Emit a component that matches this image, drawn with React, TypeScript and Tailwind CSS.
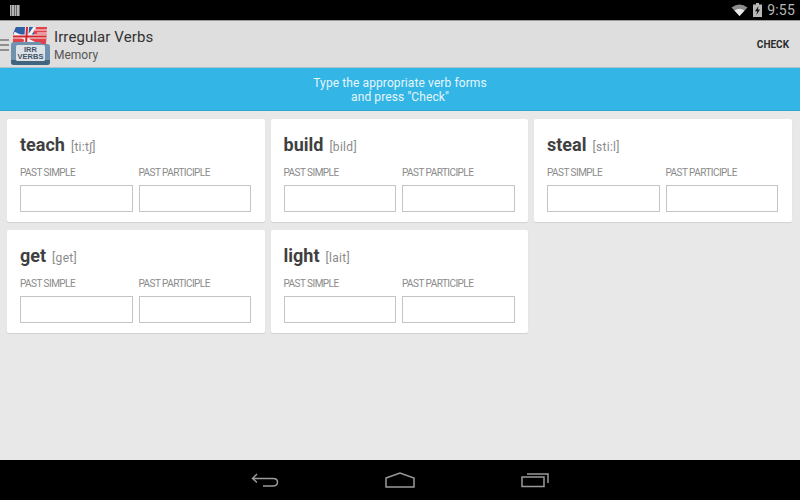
const verbs = [
  [
    { word: "teach", ipa: "[ti:tʃ]" },
    { word: "build", ipa: "[bild]" },
    { word: "steal", ipa: "[sti:l]" },
  ],
  [
    { word: "get", ipa: "[get]" },
    { word: "light", ipa: "[lait]" },
  ],
];

function Logo() {
  return (
    <div className="relative w-[39px] h-[38px] ml-[2px] mt-[4px] shrink-0">
      <svg viewBox="0 0 39 38" width="39" height="38" className="block">
        <path d="M2 7L5 0H36L35 17H2Z" fill="#e2414a" />
        <path d="M2 7L5 0H23V11H2Z" fill="#2f5fa6" />
        <path d="M3 6L27 18M24 0L12 18" stroke="#f2f2f2" strokeWidth="3" />
        <path d="M2 9.5H35M16 0L15 18" stroke="#f2f2f2" strokeWidth="4" />
        <path d="M2 9.5H35M16 0L15 18" stroke="#d4262f" strokeWidth="2" />
        <path d="M24 3H36M26 6H36" stroke="#f2f2f2" strokeWidth="1" />
        <path d="M0 18Q0 15 3 15H29L31 17H36Q39 17 39 20V35Q39 38 36 38H3Q0 38 0 35Z" fill="#6f93ae" />
        <path d="M0 33H39V35Q39 38 36 38H3Q0 38 0 35Z" fill="#41647f" />
        <rect x="5" y="18" width="29" height="16" rx="1.5" fill="#dde2e6" />
      </svg>
      <div className="absolute left-[5px] top-[18px] w-[29px] h-[16px] flex flex-col items-center justify-center text-[#3d5468] text-[7.5px] leading-[7.5px] font-bold font-['Liberation_Sans',sans-serif]">
        <span>IRR</span>
        <span>VERBS</span>
      </div>
    </div>
  );
}

function Field({ label }: { label: string }) {
  return (
    <div className="w-[112.5px]">
      <p className="text-[#8a8a8a] text-[10px] tracking-[-0.55px] leading-[14px] h-[14px] mb-[6px] pt-[1px]">{label}</p>
      <div className="h-[27px] bg-white border border-[#c4c4c4]" />
    </div>
  );
}

function VerbCard({ word, ipa }: { word: string; ipa: string }) {
  return (
    <div className="w-[257.5px] h-[103px] bg-white rounded-[2px] shadow-[0_1px_1px_#d2d2d2] px-[13px] pt-[13px]">
      <div className="flex items-baseline gap-[6px] h-[26px] mb-[7px]">
        <span className="text-[#3f3f3f] text-[18px] leading-[26px] font-bold">{word}</span>
        <span className="text-[#8a8a8a] text-[12px] tracking-[0.3px]">{ipa}</span>
      </div>
      <div className="flex gap-[6px]">
        <Field label="PAST SIMPLE" />
        <Field label="PAST PARTICIPLE" />
      </div>
    </div>
  );
}

export default function App() {
  return (
    <div className="w-[800px] h-[500px] flex flex-col overflow-hidden bg-[#e8e8e8] font-['Roboto',sans-serif]">
      {/* Status bar */}
      <div className="h-[20px] bg-black flex items-center justify-between pl-[10px] pr-[5px] shrink-0">
        <div className="w-[10px] h-[11px] bg-[repeating-linear-gradient(90deg,#b5b5b5_0px,#b5b5b5_1.5px,#666_1.5px,#666_2.5px)]" />
        <div className="flex items-center">
          <svg width="17" height="12" viewBox="0 0 17 12" className="mr-[5px]">
            <path d="M0.5 3.5Q8.5 -2.5 16.5 3.5L8.5 12Z" fill="#8c8c8c" />
            <path d="M3.5 6.6Q8.5 3 13.5 6.6L8.5 12Z" fill="#e8e8e8" />
          </svg>
          <svg width="9" height="14" viewBox="0 0 9 14" className="mr-[5px]">
            <path d="M3 0H6V1.5H9V14H0V1.5H3Z" fill="#b8b8b8" />
            <path d="M5.5 3L2 8.2H4.2L3.4 12L7 6.6H4.8Z" fill="#111" />
          </svg>
          <span className="text-[#b8b8b8] text-[14px] leading-[20px] tracking-[0.2px]">9:55</span>
        </div>
      </div>

      {/* Action bar */}
      <div className="h-[47px] bg-[#dedede] border-t border-[#9a9a9a] flex items-center shrink-0">
        <div className="w-[9px] flex flex-col gap-[3px] shrink-0 mt-[2px]">
          <div className="h-[2px] bg-[#8f8f8f]" />
          <div className="h-[2px] bg-[#8f8f8f]" />
          <div className="h-[2px] bg-[#8f8f8f]" />
        </div>
        <Logo />
        <div className="ml-[4px] flex-1 pt-[1px]">
          <p className="text-[#333] text-[15px] leading-[19px] tracking-[0.1px] mt-[1px]">Irregular Verbs</p>
          <p className="text-[#555] text-[12px] leading-[16px]">Memory</p>
        </div>
        <span className="text-[#2c2c2c] text-[10px] font-bold mr-[11px]">CHECK</span>
      </div>

      {/* Hint */}
      <div className="h-[44px] bg-[#33b5e5] border-t border-[#a9c2cc] border-b-[#2ea6d2] border-b text-[#e6f6fc] text-[12px] leading-[14px] tracking-[0.1px] flex flex-col items-center justify-center shrink-0 pt-[1px]">
        <p>Type the appropriate verb forms</p>
        <p>and press "Check"</p>
      </div>

      {/* Cards */}
      <main className="flex-1 pl-[7px] pt-[8px] flex flex-col gap-[8px]">
        {verbs.map((row, i) => (
          <div key={i} className="flex gap-[6px]">
            {row.map((v) => (
              <VerbCard key={v.word} word={v.word} ipa={v.ipa} />
            ))}
          </div>
        ))}
      </main>

      {/* Nav bar */}
      <div className="h-[40px] bg-black flex items-center justify-center shrink-0">
        <div className="w-[298px] flex items-center justify-between">
          <svg width="28" height="16" viewBox="0 0 28 16" fill="none" stroke="#9a9a9a" strokeWidth="1.5">
            <path d="M6 2L1.5 6.5L6 10.5M1.5 6.5H22Q26.5 6.5 26.5 10Q26.5 14 22 14H12" />
          </svg>
          <svg width="30" height="16" viewBox="0 0 30 16" fill="none" stroke="#9a9a9a" strokeWidth="1.5">
            <path d="M1 6L15 1L29 6V15H1Z" />
          </svg>
          <svg width="28" height="16" viewBox="0 0 28 16" fill="none" stroke="#9a9a9a" strokeWidth="1.5">
            <rect x="1" y="5" width="22" height="9.5" />
            <path d="M6 2H27V11" />
          </svg>
        </div>
      </div>
    </div>
  );
}
